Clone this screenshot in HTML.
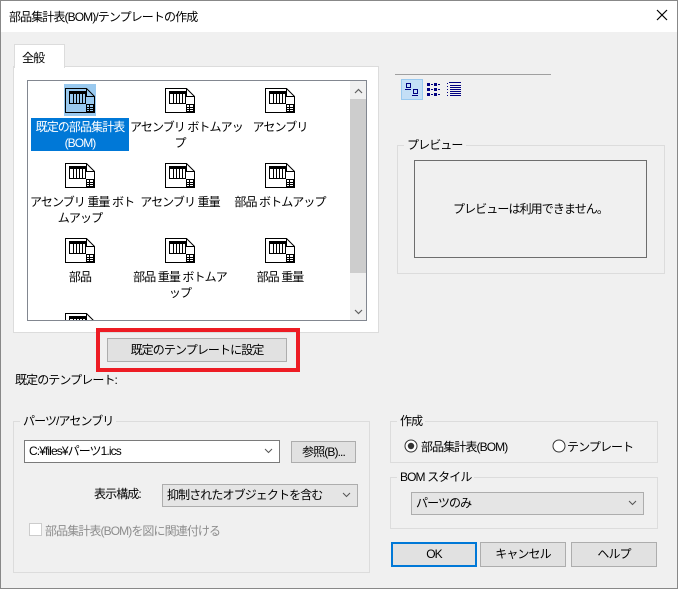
<!DOCTYPE html>
<html><head><meta charset="utf-8"><style>
*{box-sizing:border-box;margin:0;padding:0}
body{width:678px;height:589px;background:#f0f0f0;font-family:"Liberation Sans","Noto Sans CJK JP",sans-serif;font-size:12px;color:#000;position:relative;overflow:hidden;letter-spacing:-0.9px;white-space:nowrap}
.a{position:absolute}
.win{position:absolute;left:0;top:0;width:678px;height:589px;border:1px solid #888}
.title{left:1px;top:1px;width:676px;height:31px;background:#fff}
.btn{position:absolute;background:#e1e1e1;border:1px solid #adadad;text-align:center;line-height:22px}
.grp{position:absolute;border:1px solid #dcdcdc}
.grp>.lg{position:absolute;top:-9px;left:6px;background:#f0f0f0;padding:0 3px;line-height:16px}
.combo{position:absolute;border:1px solid #7a7a7a;background:#fff;padding-left:4px;line-height:20px}
.combo.g{background:#e5e5e5;border-color:#adadad}
.chev{position:absolute;right:6px;top:0}
.it{position:absolute;width:100px;text-align:center;line-height:16px}
.ic{position:absolute}
</style></head><body>
<div class="win"></div>
<div class="a title"></div>
<div class="a" style="left:9px;top:8px;font-size:12px">部品集計表(BOM)/テンプレートの作成</div>
<svg class="a" style="left:655px;top:8px" width="14" height="14"><path d="M2 2L12 12M12 2L2 12" stroke="#000" stroke-width="1.2"/></svg>

<div class="a" style="left:13px;top:66px;width:366px;height:267px;background:#fff;border:1px solid #dcdcdc"></div>
<div class="a" style="left:14px;top:44px;width:51px;height:24px;background:#fff;border:1px solid #dcdcdc;border-bottom:none;padding:4px 0 0 7px">全般</div>

<div class="a" style="left:27px;top:80px;width:340px;height:241px;background:#fff;border:1px solid #828790;overflow:hidden">
 <div class="a" style="left:322px;top:0;width:17px;height:239px;background:#f0f0f0"></div>
 <div class="a" style="left:322px;top:18px;width:17px;height:174px;background:#cdcdcd"></div>
 <svg class="a" style="left:326px;top:7px" width="9" height="6"><path d="M1 5L4.5 1.5L8 5" stroke="#606060" fill="none" stroke-width="1.2"/></svg>
 <svg class="a" style="left:326px;top:228px" width="9" height="6"><path d="M1 1L4.5 4.5L8 1" stroke="#606060" fill="none" stroke-width="1.2"/></svg>
</div>
<div class="a" style="left:64px;top:84px;width:32px;height:32px;background:#99c9ef"></div>
<div class="a" style="left:31px;top:118px;width:98px;height:33px;background:#0078d7"></div>

<svg width="0" height="0" style="position:absolute"><defs><g id="ic">
<path d="M0.5 0.5H21.5L29.5 8.5V24.5H0.5Z" fill="none" stroke="#000"/><path d="M21.5 0.5V8.5H29.5" fill="none" stroke="#000"/>
<rect x="4.5" y="3.5" width="16" height="12" fill="none" stroke="#000"/><rect x="4" y="3" width="17" height="3" fill="#000"/>
<path d="M8.5 6V15M11.5 6V15M14.5 6V15M17.5 6V15" stroke="#000"/>
<rect x="21.5" y="16.5" width="7" height="7" fill="none" stroke="#000"/><path d="M21 19.5H29M21 21.5H29M24.5 17V24" stroke="#000"/>
</g></defs></svg>

<svg class="ic" style="left:65px;top:88px" width="31" height="26"><use href="#ic"/></svg>
<svg class="ic" style="left:165px;top:88px" width="31" height="26"><use href="#ic"/></svg>
<svg class="ic" style="left:265px;top:88px" width="31" height="26"><use href="#ic"/></svg>
<svg class="ic" style="left:65px;top:163px" width="31" height="26"><use href="#ic"/></svg>
<svg class="ic" style="left:165px;top:163px" width="31" height="26"><use href="#ic"/></svg>
<svg class="ic" style="left:265px;top:163px" width="31" height="26"><use href="#ic"/></svg>
<svg class="ic" style="left:65px;top:238px" width="31" height="26"><use href="#ic"/></svg>
<svg class="ic" style="left:165px;top:238px" width="31" height="26"><use href="#ic"/></svg>
<svg class="ic" style="left:265px;top:238px" width="31" height="26"><use href="#ic"/></svg>
<div class="a" style="left:65px;top:313px;width:31px;height:7px;overflow:hidden"><svg width="31" height="26"><use href="#ic"/></svg></div>

<div class="it" style="left:30px;top:119px;color:#fff">既定の部品集計表<br>(BOM)</div>
<div class="it" style="left:130px;top:119px">アセンブリ ボトムアッ<br>プ</div>
<div class="it" style="left:230px;top:119px">アセンブリ</div>
<div class="it" style="left:30px;top:194px">アセンブリ 重量 ボト<br>ムアップ</div>
<div class="it" style="left:130px;top:194px">アセンブリ 重量</div>
<div class="it" style="left:230px;top:194px">部品 ボトムアップ</div>
<div class="it" style="left:30px;top:269px">部品</div>
<div class="it" style="left:130px;top:269px">部品 重量 ボトムア<br>ップ</div>
<div class="it" style="left:230px;top:269px">部品 重量</div>

<div class="a" style="left:96px;top:328px;width:204px;height:44px;border:4px solid #ed1c24"></div>
<div class="btn" style="left:107px;top:338px;width:180px;height:24px">既定のテンプレートに設定</div>
<div class="a" style="left:15px;top:371px">既定のテンプレート:</div>

<div class="a" style="left:395px;top:74px;width:156px;height:1px;background:#a0a0a0"></div>
<div class="a" style="left:401px;top:79px;width:22px;height:21px;background:#c4dff6;border:1px solid #99c9ef"></div>
<svg class="a" style="left:401px;top:79px" width="70" height="22">
<g fill="none" stroke="#000080"><rect x="5.5" y="4.5" width="4" height="4"/><path d="M4 10.5H10"/><rect x="12.5" y="10.5" width="4" height="4"/><path d="M11 16.5H17"/></g>
<g fill="#000080"><rect x="26" y="4" width="3" height="3"/><rect x="26" y="9" width="3" height="3"/><rect x="26" y="14" width="3" height="3"/><rect x="30" y="5" width="2" height="1"/><rect x="30" y="10" width="2" height="1"/><rect x="30" y="15" width="2" height="1"/><rect x="33" y="4" width="3" height="3"/><rect x="33" y="9" width="3" height="3"/><rect x="33" y="14" width="3" height="3"/><rect x="37" y="5" width="2" height="1"/><rect x="37" y="10" width="2" height="1"/><rect x="37" y="15" width="2" height="1"/>
<rect x="46" y="4" width="1" height="1"/><rect x="46" y="7" width="1" height="1"/><rect x="46" y="10" width="1" height="1"/><rect x="46" y="13" width="1" height="1"/><rect x="46" y="16" width="1" height="1"/>
<rect x="48" y="3" width="12" height="1"/><rect x="49" y="6" width="11" height="1"/><rect x="49" y="8" width="11" height="1"/><rect x="49" y="10" width="11" height="1"/><rect x="49" y="12" width="11" height="1"/><rect x="49" y="14" width="11" height="1"/><rect x="49" y="16" width="11" height="1"/></g>
</svg>

<div class="grp" style="left:397px;top:145px;width:268px;height:129px"><div class="lg">プレビュー</div></div>
<div class="a" style="left:414px;top:160px;width:233px;height:98px;border:1px solid #6d6d6d;text-align:center;line-height:96px">プレビューは利用できません。</div>

<div class="grp" style="left:13px;top:421px;width:357px;height:152px"><div class="lg">パーツ/アセンブリ</div></div>
<div class="combo" style="left:24px;top:440px;width:256px;height:23px">C:¥files¥パーツ1.ics<svg class="chev" style="top:7px" width="9" height="6"><path d="M1 1L4.5 4.5L8 1" stroke="#555" fill="none"/></svg></div>
<div class="btn" style="left:291px;top:441px;width:65px;height:22px;line-height:20px">参照(B)...</div>
<div class="a" style="left:94px;top:485px">表示構成:</div>
<div class="combo g" style="left:162px;top:484px;width:196px;height:23px">抑制されたオブジェクトを含む<svg class="chev" style="top:7px" width="9" height="6"><path d="M1 1L4.5 4.5L8 1" stroke="#555" fill="none"/></svg></div>
<div class="a" style="left:29px;top:523px;width:13px;height:13px;border:1px solid #cccccc;background:#fff"></div>
<div class="a" style="left:45px;top:522px;color:#8d8d8d">部品集計表(BOM)を図に関連付ける</div>

<div class="grp" style="left:390px;top:421px;width:268px;height:42px"><div class="lg">作成</div></div>
<svg class="a" style="left:404px;top:439px" width="14" height="14"><circle cx="7" cy="7" r="6" fill="#fff" stroke="#333"/><circle cx="7" cy="7" r="3.2" fill="#333"/></svg>
<div class="a" style="left:421px;top:438px">部品集計表(BOM)</div>
<svg class="a" style="left:552px;top:439px" width="14" height="14"><circle cx="7" cy="7" r="6" fill="#fff" stroke="#333"/></svg>
<div class="a" style="left:567px;top:438px">テンプレート</div>

<div class="grp" style="left:390px;top:477px;width:268px;height:52px"><div class="lg">BOM スタイル</div></div>
<div class="combo g" style="left:411px;top:492px;width:233px;height:23px">パーツのみ<svg class="chev" style="top:7px" width="9" height="6"><path d="M1 1L4.5 4.5L8 1" stroke="#555" fill="none"/></svg></div>

<div class="btn" style="left:391px;top:542px;width:86px;height:25px;border:2px solid #0078d7;line-height:21px">OK</div>
<div class="btn" style="left:480px;top:542px;width:86px;height:25px">キャンセル</div>
<div class="btn" style="left:571px;top:542px;width:86px;height:25px">ヘルプ</div>
</body></html>
